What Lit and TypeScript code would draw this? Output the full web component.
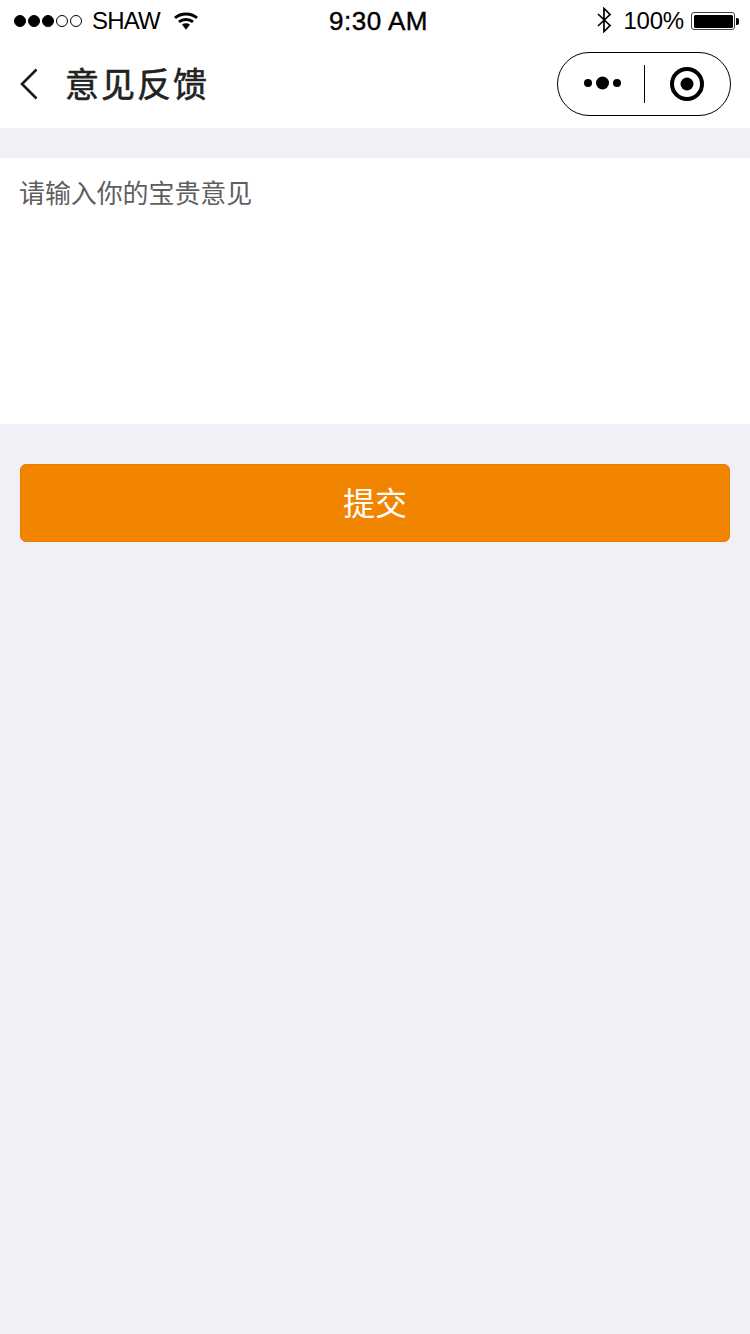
import { LitElement, html, css } from 'lit';
import { customElement } from 'lit/decorators.js';

@customElement('status-bar')
export class StatusBar extends LitElement {
  render() {
    return html`
      <div class="side">
        <div class="signal">
          ${[1, 1, 1, 0, 0].map((on) => html`<i class=${on ? 'on' : ''}></i>`)}
        </div>
        <span class="carrier">SHAW</span>
        <svg class="wifi" width="24" height="18" viewBox="0 0 24 18">
          <path d="M1 5.9C7 .7 17 .7 23 5.9" fill="none" stroke="#000" stroke-width="2.9" />
          <path d="M5 9.8C8.8 6.7 15.2 6.7 19 9.8" fill="none" stroke="#000" stroke-width="2.9" />
          <path d="M8 12.4C10.4 10.9 13.6 10.9 16 12.4L12 17.8Z" fill="#000" />
        </svg>
      </div>
      <div class="time">9:30 AM</div>
      <div class="side">
        <svg class="bt" width="16" height="26" viewBox="0 0 16 26">
          <path d="M2 7L14 18.5L8 24.5V1.5L14 7.5L2 19" fill="none" stroke="#000" stroke-width="1.7" />
        </svg>
        <span class="pct">100%</span>
        <div class="battery"><div class="fill"></div></div>
        <div class="nub"></div>
      </div>
    `;
  }

  static styles = css`
    :host {
      display: flex;
      justify-content: space-between;
      align-items: center;
      box-sizing: border-box;
      height: 40px;
      padding: 2px 11px 0 14px;
      position: relative;
      font-family: "Liberation Sans", "Noto Sans CJK SC", sans-serif;
      color: #000;
    }
    .side {
      display: flex;
      align-items: center;
    }
    .signal {
      display: flex;
      gap: 2px;
    }
    .signal i {
      width: 12px;
      height: 12px;
      box-sizing: border-box;
      border: 1px solid #000;
      border-radius: 50%;
    }
    .signal i.on {
      background: #000;
    }
    .carrier {
      font-size: 24px;
      letter-spacing: -0.8px;
      margin-left: 10px;
    }
    .wifi {
      margin: -1px 0 0 14px;
    }
    .time {
      position: absolute;
      left: 7px;
      right: 0;
      text-align: center;
      font-size: 26px;
      letter-spacing: 0.5px;
      -webkit-text-stroke: 0.4px #000;
    }
    .bt {
      margin: -2px 11px 0 0;
    }
    .pct {
      font-size: 24px;
      letter-spacing: -0.2px;
    }
    .battery {
      width: 44px;
      height: 18px;
      box-sizing: border-box;
      margin-left: 7px;
      padding: 1.5px;
      border: 1px solid #444;
      border-radius: 3px;
    }
    .fill {
      height: 100%;
      background: #000;
      border-radius: 1.5px;
    }
    .nub {
      width: 3px;
      height: 7px;
      margin-left: 1px;
      background: #000;
      border-radius: 0 2px 2px 0;
    }
  `;
}

@customElement('app-root')
export class AppRoot extends LitElement {
  render() {
    return html`
      <status-bar></status-bar>
      <header class="nav">
        <svg class="back" width="18" height="32" viewBox="0 0 18 32">
          <path d="M16.5 1.5L2 16L16.5 30.5" fill="none" stroke="#1a1a1a" stroke-width="2.6" />
        </svg>
        <h1 class="title">意见反馈</h1>
        <div class="capsule">
          <div class="cap-left">
            <svg width="38" height="18" viewBox="0 0 38 18">
              <circle cx="4" cy="9" r="4" fill="#000" />
              <circle cx="18.5" cy="9" r="6.5" fill="#000" />
              <circle cx="33" cy="9" r="4" fill="#000" />
            </svg>
          </div>
          <div class="cap-divider"></div>
          <div class="cap-right">
            <svg width="36" height="36" viewBox="0 0 36 36">
              <circle cx="18" cy="18" r="15" fill="none" stroke="#000" stroke-width="4" />
              <circle cx="18" cy="18" r="6.5" fill="#000" />
            </svg>
          </div>
        </div>
      </header>
      <div class="field">
        <div class="placeholder">请输入你的宝贵意见</div>
      </div>
      <div class="actions">
        <button class="submit">提交</button>
      </div>
    `;
  }

  static styles = css`
    :host {
      display: block;
      min-height: 1334px;
      background: #f0f0f6;
      font-family: "Liberation Sans", "Noto Sans CJK SC", sans-serif;
    }
    status-bar {
      background: #fff;
    }
    .nav {
      display: flex;
      align-items: center;
      box-sizing: border-box;
      height: 88px;
      padding: 0 19px 0 20px;
      background: #fff;
    }
    .back {
      margin-top: -1px;
    }
    .title {
      flex: 1;
      margin: -3px 0 0 27px;
      font-size: 34px;
      font-weight: 400;
      -webkit-text-stroke: 0.6px #222;
      color: #222;
      letter-spacing: 2px;
    }
    .capsule {
      display: flex;
      align-items: center;
      box-sizing: border-box;
      width: 174px;
      height: 64px;
      margin-top: -1px;
      border: 1px solid #000;
      border-radius: 32px;
    }
    .cap-left,
    .cap-right {
      flex: 1;
      display: flex;
      justify-content: center;
      align-items: center;
    }
    .cap-left svg {
      margin: 0 0 2px 4px;
    }
    .cap-divider {
      width: 1px;
      height: 38px;
      background: #000;
    }
    .field {
      box-sizing: border-box;
      height: 266px;
      margin-top: 30px;
      padding: 18px 20px;
      background: #fff;
    }
    .placeholder {
      font-size: 26px;
      line-height: 36px;
      letter-spacing: -0.1px;
      margin-left: -1px;
      color: #5f5f5f;
    }
    .actions {
      padding: 40px 20px;
    }
    .submit {
      display: block;
      width: 100%;
      height: 78px;
      padding: 0 0 4px;
      border: 1px solid #e57e00;
      border-radius: 6px;
      background: #f28500;
      color: #fff;
      font-family: inherit;
      font-size: 32px;
    }
  `;
}
